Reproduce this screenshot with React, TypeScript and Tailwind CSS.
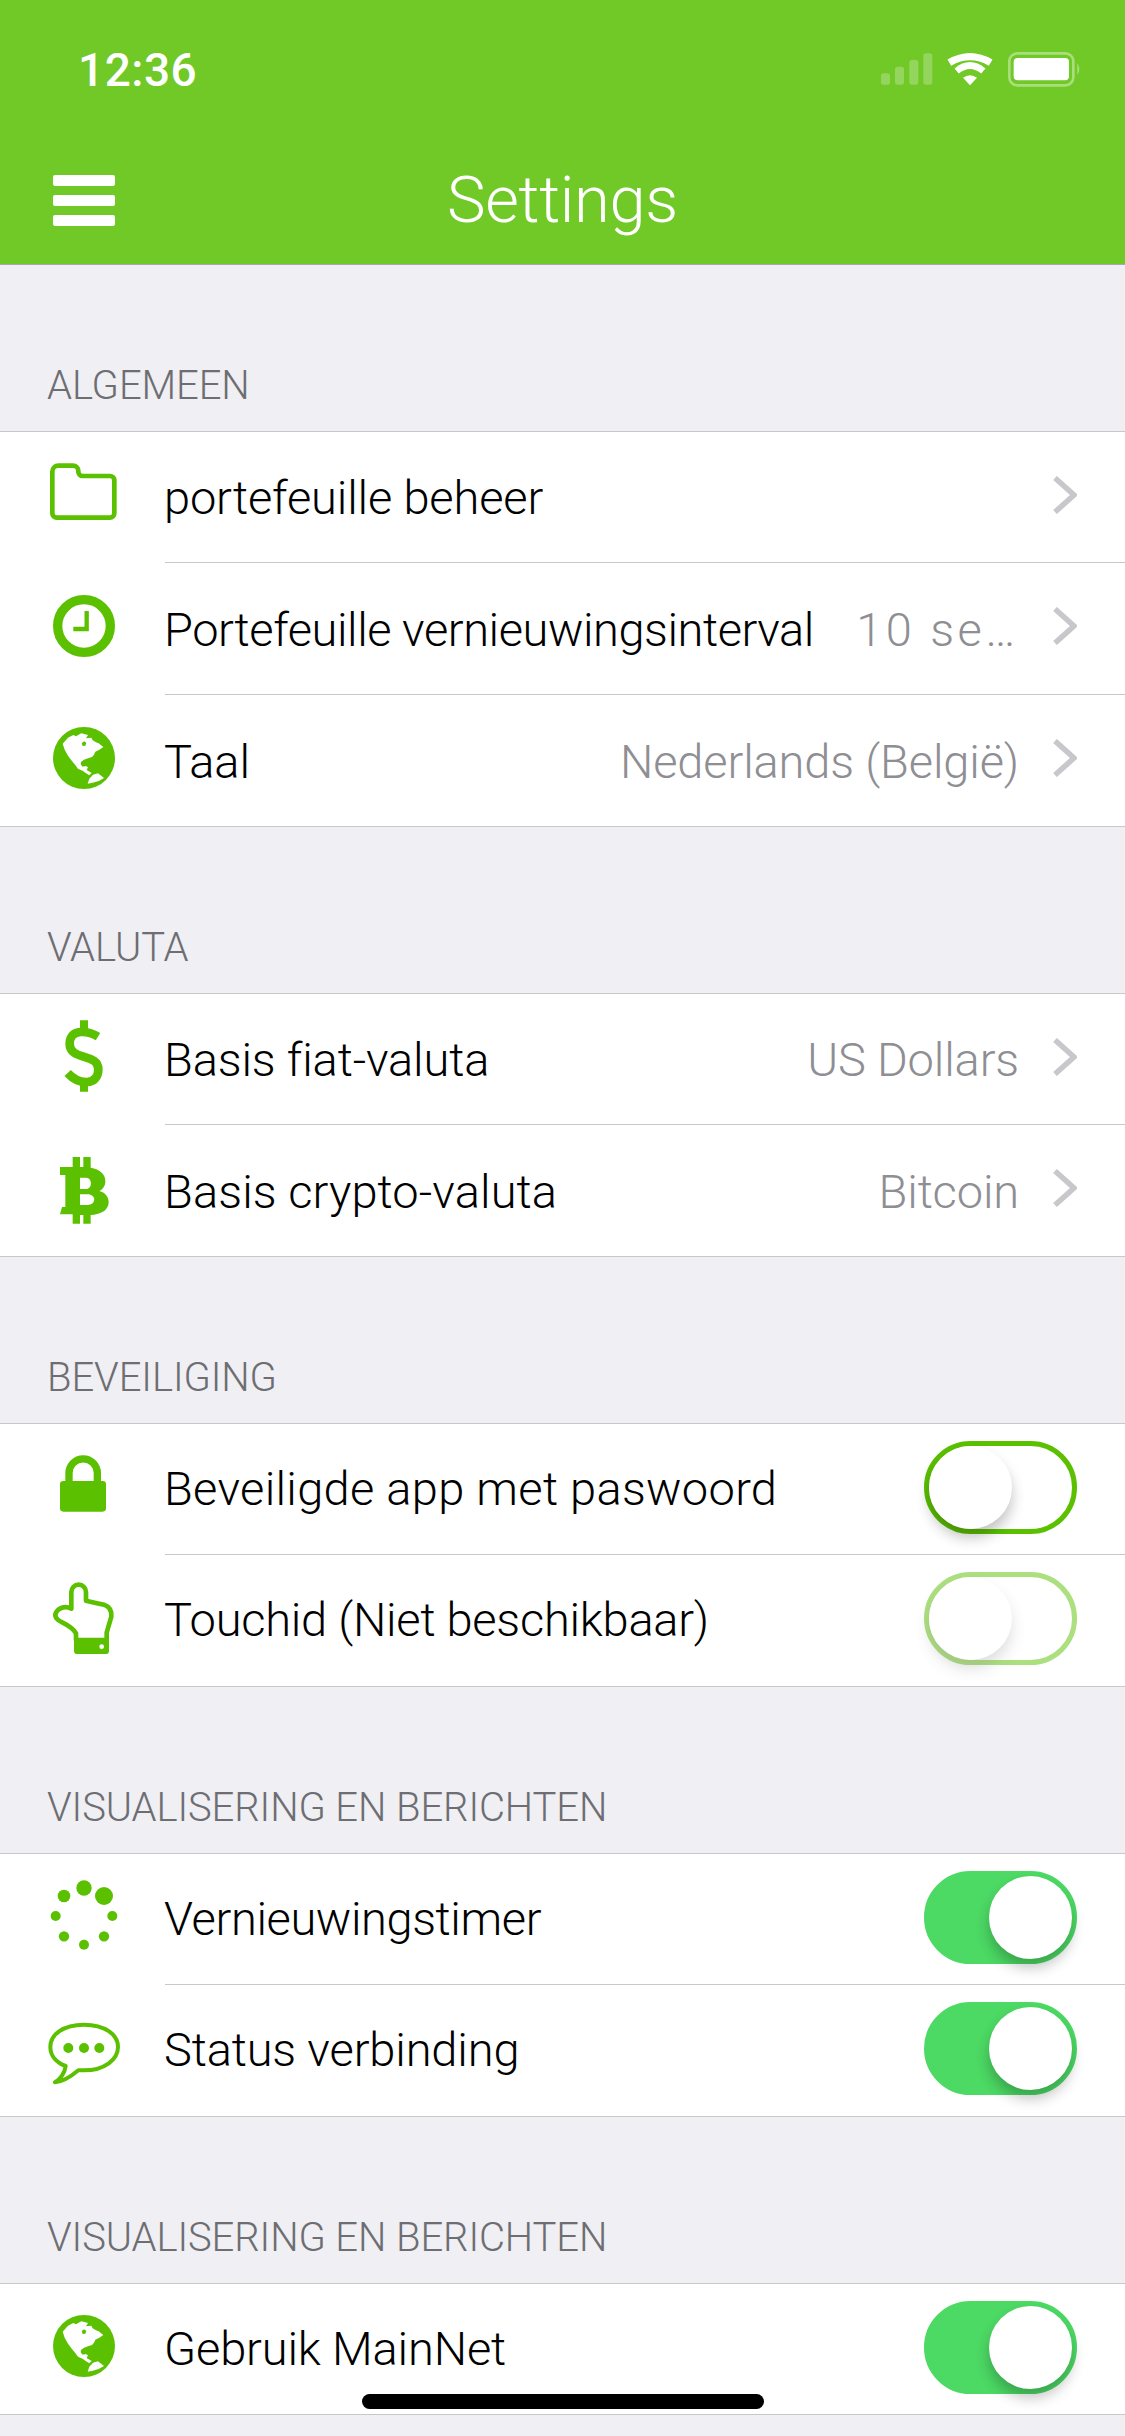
import type { ReactNode } from 'react';

const G = '#5bc000';

function Cell({ y, children }: { y: number; children: ReactNode }) {
  return (
    <svg width={165} height={131} viewBox={`0 ${y} 495 393`} className="shrink-0 self-start">
      {children}
    </svg>
  );
}

const FolderIcon = () => (
  <Cell y={33}>
    <path d="M157 152a18 18 0 0 1 18-18h44a16 16 0 0 1 16 16v2a13 13 0 0 0 13 13h82a13 13 0 0 1 13 13v99a13 13 0 0 1-13 13H170a13 13 0 0 1-13-13Z" fill="none" stroke={G} strokeWidth={14} />
  </Cell>
);

const ClockIcon = () => (
  <Cell y={426}>
    <circle cx={252} cy={615} r={79} fill="none" stroke={G} strokeWidth={28} />
    <path d="M260 570V624H220" fill="none" stroke={G} strokeWidth={13} />
  </Cell>
);

const GlobeIcon = ({ y }: { y: number }) => (
  <Cell y={y}>
    <g transform="translate(144 906)">
      <circle cx={108} cy={105} r={93} fill={G} />
      <path d="M44 62L60 44L76 36L84 40L100 31L120 36L114 46L130 44L134 52L144 58L152 61L166 72L154 80L142 86L138 95L132 102L120 106L108 110L99 117L98 124L104 131L113 129L120 133L116 141L131 150L124 157L113 150L105 144L90 137L80 124L70 112L60 98L50 80Z" fill="#fff" />
      <path d="M101 60L109 55L115 60L112 68L104 69Z" fill={G} />
      <path d="M119 182L124 167L135 155L150 151L168 165L152 174L134 179Z" fill="#fff" />
    </g>
  </Cell>
);

const DollarIcon = () => (
  <Cell y={39}>
    <path d="M240 118H264V148H240ZM240 302H264V332H240Z" fill={G} />
    <path d="M294 167C266 150 209 140 209 188C209 240 295 215 295 265C295 316 236 312 203 276" fill="none" stroke={G} strokeWidth={26} />
  </Cell>
);

const BitcoinIcon = () => (
  <Cell y={432}>
    <path
      fillRule="evenodd"
      d="M180 558H218V528H240V558H250V528H272V560C300 565 318 580 316 604C315 618 305 628 298 630C315 634 327 648 326 665C324 690 300 700 272 702V728H250V702H240V728H218V700H180L186 678H196V582H180ZM240 590V624H258C278 624 278 590 258 590ZM240 640V672H262C290 672 290 640 262 640Z"
      fill={G}
    />
  </Cell>
);

const LockIcon = () => (
  <Cell y={9}>
    <rect x={180} y={180} width={138} height={92} rx={10} fill={G} />
    <path d="M207 185V156a42 42 0 0 1 85 0V185" fill="none" stroke={G} strokeWidth={22} />
  </Cell>
);

const HandIcon = () => (
  <Cell y={402}>
    <g transform="translate(144 465)">
      <path
        d="M70 98V48a22 22 0 0 1 44 0V74L140 80L168 86C184 92 192 102 190 122L176 170V192H84V172C76 158 64 150 44 140C26 132 18 122 24 110C30 96 50 88 70 98Z"
        fill="none"
        stroke={G}
        strokeWidth={14}
        strokeLinejoin="round"
      />
      <rect x={78} y={186} width={105} height={48} rx={10} fill={G} />
      <circle cx={161} cy={212} r={7} fill="#fff" />
    </g>
  </Cell>
);

const SpinnerIcon = () => (
  <Cell y={-21}>
    <g fill={G}>
      <circle cx={252} cy={81} r={23} />
      <circle cx={312} cy={105} r={27} />
      <circle cx={337} cy={165} r={15} />
      <circle cx={312} cy={226} r={15.5} />
      <circle cx={252} cy={251} r={15} />
      <circle cx={192} cy={226} r={15.5} />
      <circle cx={167} cy={165} r={15} />
      <circle cx={192} cy={105} r={19} />
    </g>
  </Cell>
);

const ChatIcon = () => (
  <Cell y={372}>
    <path
      d="M252 491C190 491 151 520 151 558C151 585 170 605 197 615C195 635 180 655 165 664C190 662 215 645 235 628C240 628 247 628 252 628C314 628 354 595 354 558C354 520 314 491 252 491Z"
      fill="none"
      stroke={G}
      strokeWidth={12}
      strokeLinejoin="round"
    />
    <circle cx={205} cy={561} r={15} fill={G} />
    <circle cx={252} cy={561} r={15} fill={G} />
    <circle cx={298} cy={561} r={15} fill={G} />
  </Cell>
);

function Chevron() {
  return (
    <svg width={24} height={38} viewBox="0 0 24 38" className="ml-[34px] mb-[5px] shrink-0">
      <path d="M2 2L21 19L2 36" fill="none" stroke="#c7c7cc" strokeWidth={5.5} />
    </svg>
  );
}

function Toggle({ on, disabled }: { on: boolean; disabled?: boolean }) {
  return (
    <div
      className={
        'mb-[4px] flex h-[93px] w-[153px] shrink-0 items-center rounded-full border-[5px] ' +
        (on ? 'justify-end border-[#4cd964] bg-[#4cd964] ' : 'justify-start border-[#5bc000] bg-white ') +
        (disabled ? 'opacity-50' : '')
      }
    >
      <div className="h-[83px] w-[83px] rounded-full bg-white shadow-[0_9px_14px_rgba(0,0,0,0.24)]" />
    </div>
  );
}

type RowProps = {
  icon: ReactNode;
  label: string;
  spacing?: string;
  value?: string;
  wide?: boolean;
  nav?: boolean;
  toggle?: 'on' | 'off' | 'disabled';
};

function Row({ icon, label, spacing = 'tracking-[-0.15px]', value, wide, nav, toggle }: RowProps) {
  return (
    <div className="group flex h-[132px] first:h-[131px] items-stretch">
      {icon}
      <div className="flex min-w-0 flex-1 items-center border-b border-[#c8c7cc] pr-[48px] group-last:-ml-[165px] group-last:pl-[165px]">
        <span className={'-ml-px flex-1 truncate text-[47px] font-light text-black ' + spacing + (nav ? ' pt-[3px]' : '')}>{label}</span>
        {value && (
          <span className={'pl-[30px] pt-[3px] text-[47px] font-light text-[#8e8e93] ' + (wide ? 'tracking-[3.5px]' : 'tracking-[-0.15px]')}>{value}</span>
        )}
        {nav && <Chevron />}
        {toggle && <Toggle on={toggle === 'on'} disabled={toggle === 'disabled'} />}
      </div>
    </div>
  );
}

function Section({ title, rows }: { title: string; rows: RowProps[] }) {
  return (
    <section className="first:-mt-px">
      <div className="flex h-[166px] items-end pb-[15px] pl-[47px] text-[40px] font-light tracking-[-0.1px] text-[#6d6d72]">{title}</div>
      <div className="border-t border-[#c8c7cc] bg-white">
        {rows.map((r) => (
          <Row key={r.label} {...r} />
        ))}
      </div>
    </section>
  );
}

export default function App() {
  return (
    <div className="relative h-[2436px] w-[1125px] overflow-hidden bg-[#efeff4] font-['Roboto',sans-serif]">
      <header className="h-[265px] border-b border-[#a9a9ab] bg-[#70c926]">
        <div className="flex h-[137px] items-start justify-between pl-[78px] pr-[35px] pt-[40px]">
          <span className="text-[46px] font-medium leading-[60px] tracking-[0.5px] text-white">12:36</span>
          <svg width={220} height={60} viewBox="0 0 660 180">
            <g fill="#fff" opacity={0.25}>
              <rect x={33} y={100} width={27} height={34} rx={8} />
              <rect x={75} y={80} width={27} height={54} rx={8} />
              <rect x={118} y={60} width={27} height={74} rx={8} />
              <rect x={160} y={40} width={27} height={94} rx={8} />
            </g>
            <path d="M300 136L279 113Q300 98 321 113Z" fill="#fff" />
            <path d="M260 93Q300 60 340 93" fill="none" stroke="#fff" strokeWidth={20} />
            <path d="M238 68Q300 32 362 68" fill="none" stroke="#fff" strokeWidth={22} />
            <rect x={418} y={40} width={192} height={96} rx={24} fill="none" stroke="#fff" strokeOpacity={0.4} strokeWidth={8} />
            <rect x={431} y={54} width={166} height={67} rx={12} fill="#fff" />
            <path d="M622 70Q634 87 622 105Z" fill="#fff" opacity={0.4} />
          </svg>
        </div>
        <div className="grid h-[127px] grid-cols-[1fr_auto_1fr] items-center">
          <div className="flex flex-col gap-[9px] pl-[53px]">
            <div className="h-[11px] w-[62px] rounded-[2px] bg-white" />
            <div className="h-[11px] w-[62px] rounded-[2px] bg-white" />
            <div className="h-[11px] w-[62px] rounded-[2px] bg-white" />
          </div>
          <h1 className="text-[65px] font-light tracking-[-0.3px] text-white">Settings</h1>
          <div />
        </div>
      </header>
      <Section
        title="ALGEMEEN"
        rows={[
          { icon: <FolderIcon />, label: 'portefeuille beheer', nav: true },
          { icon: <ClockIcon />, label: 'Portefeuille vernieuwingsinterval', spacing: 'tracking-[-0.45px]', value: '10 se…', wide: true, nav: true },
          { icon: <GlobeIcon y={822} />, label: 'Taal', value: 'Nederlands (België)', nav: true },
        ]}
      />
      <Section
        title="VALUTA"
        rows={[
          { icon: <DollarIcon />, label: 'Basis fiat-valuta', value: 'US Dollars', nav: true },
          { icon: <BitcoinIcon />, label: 'Basis crypto-valuta', spacing: 'tracking-[0.1px]', value: 'Bitcoin', nav: true },
        ]}
      />
      <Section
        title="BEVEILIGING"
        rows={[
          { icon: <LockIcon />, label: 'Beveiligde app met paswoord', spacing: 'tracking-[0.3px]', toggle: 'off' },
          { icon: <HandIcon />, label: 'Touchid (Niet beschikbaar)', spacing: 'tracking-[-0.25px]', toggle: 'disabled' },
        ]}
      />
      <Section
        title="VISUALISERING EN BERICHTEN"
        rows={[
          { icon: <SpinnerIcon />, label: 'Vernieuwingstimer', spacing: 'tracking-[-0.4px]', toggle: 'on' },
          { icon: <ChatIcon />, label: 'Status verbinding', toggle: 'on' },
        ]}
      />
      <Section
        title="VISUALISERING EN BERICHTEN"
        rows={[{ icon: <GlobeIcon y={825} />, label: 'Gebruik MainNet', toggle: 'on' }]}
      />
      <div className="absolute bottom-[27px] left-[362px] h-[15px] w-[402px] rounded-full bg-black" />
    </div>
  );
}
